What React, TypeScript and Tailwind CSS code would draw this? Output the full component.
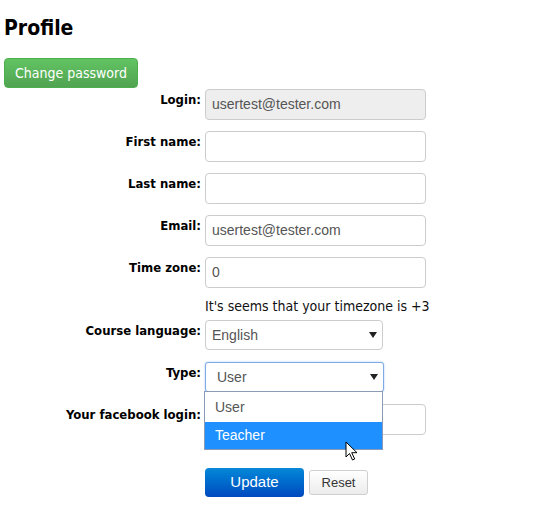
import React from "react";

const labelFont = { fontFamily: '"DejaVu Sans Condensed", "DejaVu Sans", sans-serif' };

type Field = { label: string; value?: string; disabled?: boolean };

const fields: Field[] = [
  { label: "Login:", value: "usertest@tester.com", disabled: true },
  { label: "First name:" },
  { label: "Last name:" },
  { label: "Email:", value: "usertest@tester.com" },
  { label: "Time zone:", value: "0" },
];

function Label({ children }: { children: React.ReactNode }) {
  return (
    <div
      className="w-[197px] shrink-0 pt-[3px] text-right text-[13px] font-bold leading-4 text-black"
      style={labelFont}
    >
      {children}
    </div>
  );
}

function TextBox({ value, disabled }: { value?: string; disabled?: boolean }) {
  return (
    <div
      className={`flex h-[31px] w-[221px] items-center rounded-[4px] border border-[#cccccc] px-[6px] font-['Liberation_Sans',Arial,sans-serif] text-[14px] text-[#555] ${
        disabled ? "bg-[#eeeeee]" : "bg-white"
      }`}
    >
      {value}
    </div>
  );
}

function Arrow() {
  return (
    <svg width="8" height="6" viewBox="0 0 8 6" className="shrink-0">
      <path d="M0 0h8L4 6z" fill="#222" />
    </svg>
  );
}

function Cursor() {
  return (
    <svg width="14" height="21" viewBox="0 0 14 21" className="absolute left-[345px] top-[441px]">
      <path d="M1 1v15l3.5-3.5 3 6.5 2.2-1-3-6.3H12z" fill="#fff" stroke="#000" strokeWidth="1" strokeLinejoin="round" />
    </svg>
  );
}

export default function App() {
  return (
    <div className="relative h-[516px] w-[560px] bg-white pl-[4px]">
      <h1 className="pt-[14px] text-[21px] font-bold leading-7 text-black" style={labelFont}>
        Profile
      </h1>
      <button
        className="mt-[16px] h-[30px] w-[134px] rounded-[4px] border border-[#4cae4c] bg-gradient-to-b from-[#62c462] to-[#51a351] text-[14px] text-white"
        style={labelFont}
      >
        Change password
      </button>

      <div className="mt-[1px] flex flex-col">
        {fields.map((f) => (
          <div key={f.label} className="mb-[11px] flex gap-[4px]">
            <Label>{f.label}</Label>
            <TextBox value={f.value} disabled={f.disabled} />
          </div>
        ))}

        <div
          className="-mt-[2px] ml-[201px] text-[14px] leading-[18px] text-[#111]"
          style={labelFont}
        >
          It's seems that your timezone is +3
        </div>

        <div className="mt-[5px] flex gap-[4px]">
          <Label>Course language:</Label>
          <div className="flex h-[30px] w-[178px] items-center justify-between rounded-[4px] border border-[#cccccc] bg-white pl-[6px] pr-[5px] font-['Liberation_Sans',Arial,sans-serif] text-[14px] text-[#555]">
            English
            <Arrow />
          </div>
        </div>

        <div className="mt-[12px] flex gap-[4px]">
          <Label>Type:</Label>
          <div className="flex h-[30px] w-[179px] items-center justify-between rounded-[3px] border border-[#7eaae6] bg-white pl-[11px] pr-[5px] font-['Liberation_Sans',Arial,sans-serif] text-[14px] text-[#555] shadow-[0_0_2px_#9ec3f5]">
            User
            <Arrow />
          </div>
        </div>

        <div className="mt-[12px] flex gap-[4px]">
          <Label>Your facebook login:</Label>
          <TextBox />
        </div>

        <div className="ml-[201px] mt-[33px] flex items-center gap-[5px] font-['Liberation_Sans',Arial,sans-serif]">
          <button className="h-[29px] w-[99px] rounded-[4px] bg-gradient-to-b from-[#0a88d8] to-[#0048bf] text-[15px] text-white">
            Update
          </button>
          <button className="h-[25px] w-[59px] rounded-[3px] border border-[#cfcfcf] bg-gradient-to-b from-white to-[#ececec] text-[13px] text-[#333]">
            Reset
          </button>
        </div>
      </div>

      <div className="absolute left-[204px] top-[391px] w-[179px] border border-[#8a9bb8] bg-white font-['Liberation_Sans',Arial,sans-serif] text-[14px]">
        <div className="flex h-[30px] items-center pl-[10px] text-[#555]">User</div>
        <div className="flex h-[27px] items-center bg-[#1e90ff] pl-[10px] text-white">Teacher</div>
      </div>
      <Cursor />
    </div>
  );
}
